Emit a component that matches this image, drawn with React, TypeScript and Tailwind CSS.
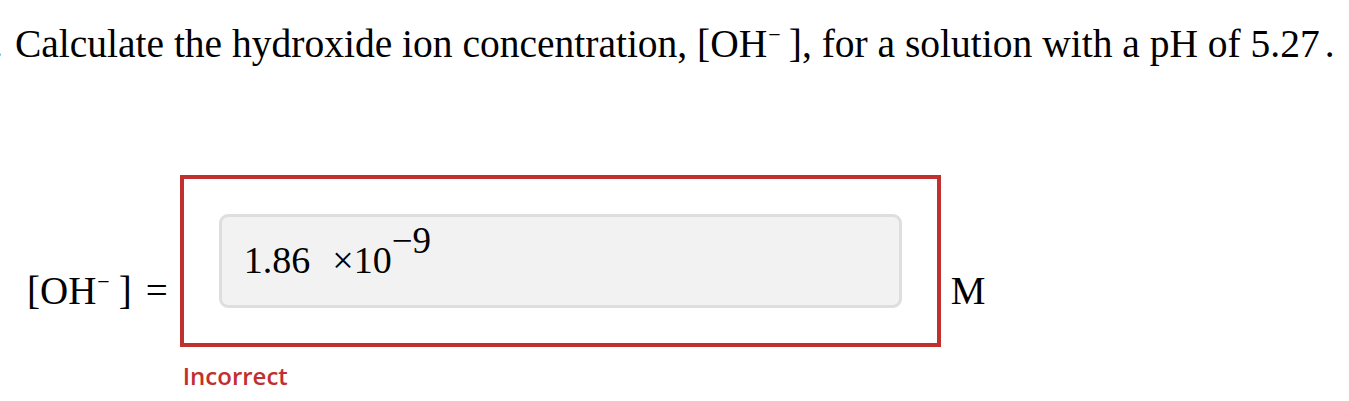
export default function App() {
  return (
    <div className="min-h-[401px] bg-white text-black font-['Liberation_Serif',serif]">
      {/* Question */}
      <div className="pt-[22px] pl-[15px] text-[39.5px] leading-[44px] whitespace-nowrap">
        <span className="ml-[-22px] mr-[12px]">.</span>
        Calculate the hydroxide ion concentration, [OH
        <sup className="text-[22px] top-[-15px] ml-[1px] mr-[8px]">−</sup>], for a solution with a pH of 5.27
        <span className="ml-[5px]">.</span>
      </div>

      {/* Answer row */}
      <div className="mt-[109px] flex items-start pl-[27px]">
        <div className="pt-[94px] pr-[12px] text-[39px] leading-[44px] whitespace-nowrap">
          [OH<sup className="text-[22px] top-[-15px] ml-[1px] mr-[9px]">−</sup>]
          <span className="ml-[14px]">=</span>
        </div>
        <div className="flex flex-col">
          <div className="w-[761px] border-4 border-[#c0302f] p-[35px]">
            <div className="h-[94px] rounded-[9px] border-[3px] border-[#dedede] bg-[#f2f2f2] pl-[22px] pt-[21px] text-[38px] leading-[44px] whitespace-nowrap">
              1.86
              <span className="ml-[22px]">×10</span>
              <sup className="text-[37px] top-[-20px]">−9</sup>
            </div>
          </div>
          <div className="pt-[14px] pl-[3px] font-['Open_Sans',sans-serif] font-semibold text-[24px] leading-[30px] text-[#c0302f]">
            Incorrect
          </div>
        </div>
        <div className="pt-[94px] pl-[10px] text-[39px] leading-[44px]">M</div>
      </div>
    </div>
  );
}
